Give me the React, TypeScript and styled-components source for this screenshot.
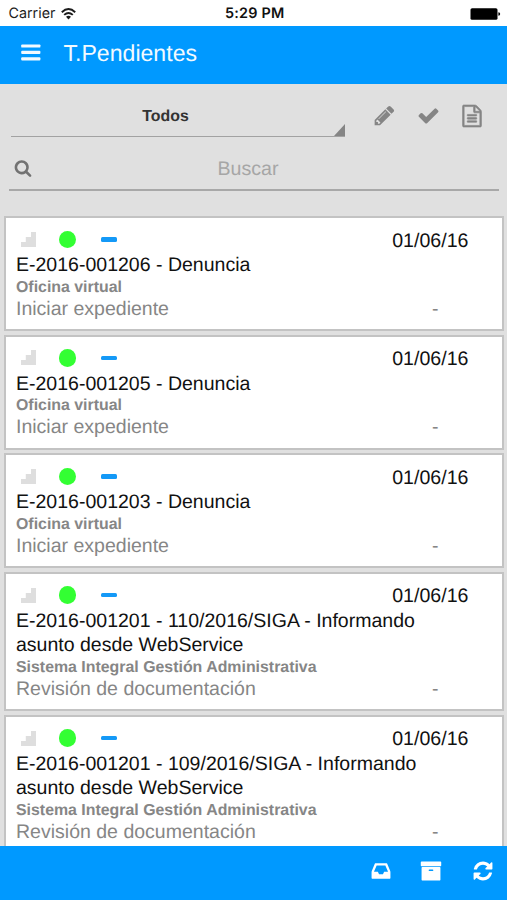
import React from 'react';
import styled, { createGlobalStyle } from 'styled-components';

const Global = createGlobalStyle`
  * { box-sizing: border-box; }
  html, body { margin: 0; padding: 0; background: #e0e0e0; }
  body {
    font-family: "Liberation Sans", Arial, sans-serif;
    text-rendering: geometricPrecision;
    overflow: hidden;
  }
`;

const Screen = styled.div`
  width: 507px;
  height: 900px;
  display: flex;
  flex-direction: column;
  overflow: hidden;
  background: #e0e0e0;
`;

const StatusBar = styled.div`
  flex: none;
  height: 25.5px;
  display: grid;
  grid-template-columns: 1fr auto 1fr;
  align-items: center;
  padding: 2px 6px 0 8.5px;
  background: #fff;
  color: #1c1c1c;
  font: 400 14.3px/20px Inter, sans-serif;
`;

const Carrier = styled.div`
  display: flex;
  align-items: center;
  gap: 6px;
`;

const Clock = styled.div`
  padding-top: 1px;
  font-weight: 600;
  font-size: 14.4px;
  letter-spacing: 0.25px;
  color: #111;
`;

const BatterySlot = styled.div`
  display: flex;
  justify-content: flex-end;
`;

const Header = styled.header`
  flex: none;
  height: 58.5px;
  display: flex;
  align-items: center;
  gap: 22.5px;
  padding: 0 21px 4px;
  background: #0099ff;
  color: #f2faff;
`;

const Title = styled.h1`
  margin: 0;
  font-size: 23.1px;
  font-weight: 400;
  line-height: 28px;
`;

const Filters = styled.section`
  flex: none;
  height: 132px;
  display: flex;
  flex-direction: column;
`;

const FilterRow = styled.div`
  height: 53px;
  display: flex;
  align-items: stretch;
  padding-left: 10.5px;
`;

const Select = styled.div`
  width: 334px;
  display: flex;
  align-items: flex-end;
  border-bottom: 1.5px solid #a2a2a2;
`;

const SelectValue = styled.span`
  flex: 1;
  padding: 0 13px 9px 0;
  text-align: center;
  font-size: 15.9px;
  font-weight: 700;
  line-height: 20px;
  color: #333;
`;

const Actions = styled.div`
  display: flex;
  align-items: center;
  gap: 21px;
  padding: 10px 0 0 28px;
  color: #858585;
`;

const SearchRow = styled.div`
  height: 54px;
  margin: 0 8px 0 9px;
  display: flex;
  align-items: center;
  padding: 10px 0 0 5px;
  border-bottom: 2px solid #a8a8a8;
  color: #727272;
`;

const SearchHint = styled.span`
  flex: 1;
  padding: 1px 35px 0 0;
  text-align: center;
  font-size: 19.6px;
  line-height: 24px;
  color: #a6a6a6;
`;

const List = styled.main`
  flex: 1;
  min-height: 0;
  overflow: hidden;
  display: flex;
  flex-direction: column;
  gap: 3.6px;
  padding: 0 3.5px 0 4px;
`;

const Card = styled.article<{ $tall: boolean }>`
  flex: none;
  height: ${(p) => (p.$tall ? 139.4 : 115)}px;
  padding: 10px 33px 0 10px;
  border: 2px solid #c3c3c3;
  background: #fff;
`;

const CardTop = styled.div`
  height: 24px;
  display: flex;
  align-items: center;
`;

const Marks = styled.div`
  display: flex;
  align-items: center;
  padding: 0 0 1.4px 4.5px;
`;

const Dot = styled.span`
  width: 17.5px;
  height: 17.5px;
  margin: 0 25px 0 23px;
  border-radius: 50%;
  background: #33ff33;
`;

const Dash = styled.span`
  width: 16px;
  height: 4.5px;
  border-radius: 1.5px;
  background: #1499f7;
`;

const CardDate = styled.span`
  margin-left: auto;
  padding-top: 2px;
  font-size: 19.6px;
  color: #111;
`;

const Subject = styled.div`
  margin-top: 1px;
  font-size: 19.53px;
  line-height: 24.5px;
  color: #111;
  white-space: pre-line;
`;

const Origin = styled.div`
  font-size: 15.9px;
  font-weight: 700;
  line-height: 19px;
  color: #868686;
`;

const Task = styled.div`
  display: flex;
  justify-content: space-between;
  padding-right: 30px;
  font-size: 19.53px;
  line-height: 24.5px;
  color: #868686;
`;

const Footer = styled.footer`
  flex: none;
  height: 54px;
  display: flex;
  align-items: center;
  justify-content: flex-end;
  padding: 0 13.5px 4px 0;
  background: #0099ff;
  color: #fff;
`;

const FooterItem = styled.span<{ $gap: number }>`
  display: flex;
  margin-left: ${(p) => p.$gap}px;
`;

const Svg = styled.svg`
  flex: none;
  display: block;
  overflow: visible;
  fill: currentColor;
`;

const PATHS = {
  search:
    'M1216 832q0-185-131.5-316.5t-316.5-131.5-316.5 131.5-131.5 316.5 131.5 316.5 316.5 131.5 316.5-131.5 131.5-316.5zm512 832q0 52-38 90t-90 38q-54 0-90-38l-343-342q-179 124-399 124-143 0-273.5-55.5t-225-150-150-225-55.5-273.5 55.5-273.5 150-225 225-150 273.5-55.5 273.5 55.5 225 150 150 225 55.5 273.5q0 220-124 399l343 343q37 37 37 90z',
  check:
    'M1671 566q0 40-28 68l-724 724-136 136q-28 28-68 28t-68-28l-136-136-362-362q-28-28-28-68t28-68l136-136q28-28 68-28t68 28l294 295 656-657q28-28 68-28t68 28l136 136q28 28 28 68z',
  pencil:
    'M491 1536l91-91-235-235-91 91v107h128v128h107zm523-928q0-22-22-22-10 0-17 7l-542 542q-7 7-7 17 0 22 22 22 10 0 17-7l542-542q7-7 7-17zm-54-192l416 416-832 832h-416v-416zm683 96q0 53-37 90l-166 166-416-416 166-165q36-38 90-38 53 0 91 38l235 234q37 39 37 91z',
  document:
    'M1596 380q28 28 48 76t20 88v1152q0 40-28 68t-68 28h-1344q-40 0-68-28t-28-68v-1600q0-40 28-68t68-28h896q40 0 88 20t76 48zm-444-244v376h376q-10-29-22-41l-313-313q-12-12-41-22zm384 1528v-1024h-416q-40 0-68-28t-28-68v-416h-768v1536h1280zm-1024-864q0-14 9-23t23-9h704q14 0 23 9t9 23v64q0 14-9 23t-23 9h-704q-14 0-23-9t-9-23v-64zm736 224q14 0 23 9t9 23v64q0 14-9 23t-23 9h-704q-14 0-23-9t-9-23v-64q0-14 9-23t23-9h704zm0 256q14 0 23 9t9 23v64q0 14-9 23t-23 9h-704q-14 0-23-9t-9-23v-64q0-14 9-23t23-9h704z',
  inbox:
    'M1151 960h316q-1-3-2.5-8.5t-2.5-7.5l-212-496h-708l-212 496q-1 3-2.5 8.5t-2.5 7.5h316l95 192h320zm513 30v482q0 26-19 45t-45 19h-1408q-26 0-45-19t-19-45v-482q0-62 25-123l238-552q10-25 36.5-42t52.5-17h832q26 0 52.5 17t36.5 42l238 552q25 61 25 123z',
  archive:
    'M1088 832q0-26-19-45t-45-19h-256q-26 0-45 19t-19 45 19 45 45 19h256q26 0 45-19t19-45zm576-192v960q0 26-19 45t-45 19h-1408q-26 0-45-19t-19-45v-960q0-26 19-45t45-19h1408q26 0 45 19t19 45zm64-448v256q0 26-19 45t-45 19h-1536q-26 0-45-19t-19-45v-256q0-26 19-45t45-19h1536q26 0 45 19t19 45z',
  refresh:
    'M1639 1056q0 5-1 7-64 268-268 434.5t-478 166.5q-146 0-282.5-55t-243.5-157l-129 129q-19 19-45 19t-45-19-19-45v-448q0-26 19-45t45-19h448q26 0 45 19t19 45-19 45l-137 137q71 66 161 102t187 36q134 0 250-65t186-179q11-17 53-117 8-23 30-23h192q13 0 22.5 9.5t9.5 22.5zm25-800v448q0 26-19 45t-45 19h-448q-26 0-45-19t-19-45 19-45l138-138q-148-137-349-137-134 0-250 65t-186 179q-11 17-53 117-8 23-30 23h-199q-13 0-22.5-9.5t-9.5-22.5v-7q65-268 270-434.5t480-166.5q146 0 284 55.5t245 156.5l130-129q19-19 45-19t45 19 19 45z',
};

function Icon({ name, size, weight = 0 }: { name: keyof typeof PATHS; size: number; weight?: number }) {
  return (
    <Svg width={size} height={size} viewBox="0 0 1792 1792">
      <path d={PATHS[name]} stroke="currentColor" strokeWidth={weight} />
    </Svg>
  );
}

const Wifi = () => (
  <Svg width="15" height="12" viewBox="0 0 15 12">
    <g fill="none" stroke="#1c1c1c" strokeWidth="1.9">
      <path d="M0.8 4.2Q7.5-2 14.2 4.2" />
      <path d="M3.2 6.9Q7.5 3 11.8 6.9" />
    </g>
    <path d="M5 8.8Q7.5 6.8 10 8.8L7.5 11.4z" />
  </Svg>
);

const Battery = () => (
  <Svg width="31" height="12" viewBox="0 0 31 12">
    <rect x="0.5" y="0.2" width="27" height="11.6" rx="1.6" fill="#000" />
    <path d="M28.4 4.2q1.8.3 1.8 1.8t-1.8 1.8z" fill="#000" />
  </Svg>
);

const Menu = () => (
  <Svg width="20" height="17" viewBox="0 0 20 17">
    {[0.4, 6.8, 13.3].map((y) => (
      <rect key={y} x="0.2" y={y} width="19.2" height="3.2" rx="0.9" />
    ))}
  </Svg>
);

const Corner = () => (
  <Svg width="11" height="12" viewBox="0 0 11 12">
    <path d="M11 0V12H0z" fill="#858585" />
  </Svg>
);

const Steps = () => (
  <Svg width="15" height="15" viewBox="0 0 15 15">
    <path d="M10 0h5v15H0v-5h4.8V5H10z" fill="#dedede" />
  </Svg>
);

const items = [
  { subject: 'E-2016-001206 - Denuncia', origin: 'Oficina virtual', task: 'Iniciar expediente', tall: false },
  { subject: 'E-2016-001205 - Denuncia', origin: 'Oficina virtual', task: 'Iniciar expediente', tall: false },
  { subject: 'E-2016-001203 - Denuncia', origin: 'Oficina virtual', task: 'Iniciar expediente', tall: false },
  {
    subject: 'E-2016-001201 - 110/2016/SIGA - Informando\nasunto desde WebService',
    origin: 'Sistema Integral Gestión Administrativa',
    task: 'Revisión de documentación',
    tall: true,
  },
  {
    subject: 'E-2016-001201 - 109/2016/SIGA - Informando\nasunto desde WebService',
    origin: 'Sistema Integral Gestión Administrativa',
    task: 'Revisión de documentación',
    tall: true,
  },
];

export default function App() {
  return (
    <Screen>
      <Global />
      <StatusBar>
        <Carrier>
          Carrier <Wifi />
        </Carrier>
        <Clock>5:29 PM</Clock>
        <BatterySlot>
          <Battery />
        </BatterySlot>
      </StatusBar>
      <Header>
        <Menu />
        <Title>T.Pendientes</Title>
      </Header>
      <Filters>
        <FilterRow>
          <Select>
            <SelectValue>Todos</SelectValue>
            <Corner />
          </Select>
          <Actions>
            <Icon name="pencil" size={23} />
            <Icon name="check" size={23} />
            <Icon name="document" size={22} weight={50} />
          </Actions>
        </FilterRow>
        <SearchRow>
          <Icon name="search" size={18} />
          <SearchHint>Buscar</SearchHint>
        </SearchRow>
      </Filters>
      <List>
        {items.map((item) => (
          <Card key={item.subject} $tall={item.tall}>
            <CardTop>
              <Marks>
                <Steps />
                <Dot />
                <Dash />
              </Marks>
              <CardDate>01/06/16</CardDate>
            </CardTop>
            <Subject>{item.subject}</Subject>
            <Origin>{item.origin}</Origin>
            <Task>
              <span>{item.task}</span>
              <span>-</span>
            </Task>
          </Card>
        ))}
      </List>
      <Footer>
        <FooterItem $gap={0}>
          <Icon name="inbox" size={22} />
        </FooterItem>
        <FooterItem $gap={27.5}>
          <Icon name="archive" size={22} />
        </FooterItem>
        <FooterItem $gap={30}>
          <Icon name="refresh" size={22} />
        </FooterItem>
      </Footer>
    </Screen>
  );
}
